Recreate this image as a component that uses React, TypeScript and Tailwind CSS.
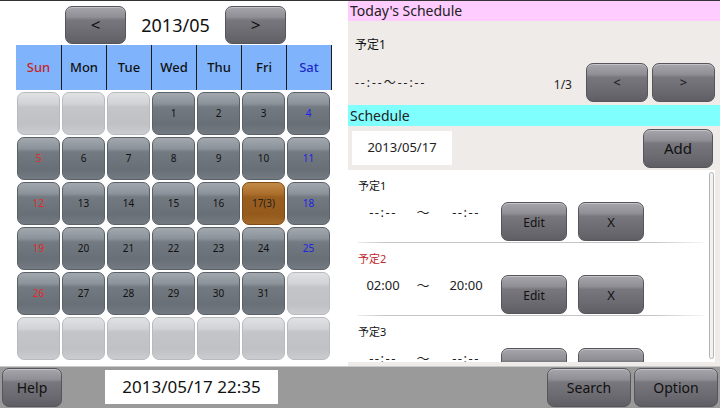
import React from "react";

const gloss =
  "flex items-center justify-center rounded-[7px] border border-[#56555b] bg-[linear-gradient(180deg,#a6a5ab_0%,#908f95_28%,#78777d_36%,#69686e_78%,#5f5e64_100%)] text-[#111] shadow-[inset_0_1px_0_rgba(255,255,255,0.35)]";

const cellDark =
  "flex items-center justify-center rounded-[7px] border border-[#5a6168] bg-[linear-gradient(180deg,#a2a8ae_0%,#8b9299_26%,#737a81_34%,#686f76_76%,#737a81_100%)] text-[10px]";
const cellLight =
  "rounded-[7px] border border-[#b9babd] bg-[linear-gradient(180deg,#e0e1e3_0%,#d2d3d6_26%,#c4c5c8_34%,#c0c1c4_76%,#cbcccf_100%)]";
const cellOrange =
  "flex items-center justify-center rounded-[7px] border border-[#7d4a16] bg-[linear-gradient(180deg,#c38a47_0%,#ac702e_26%,#9a5e1f_34%,#945a1c_76%,#a46a2a_100%)] text-[10px] text-[#222]";

type Cell = { n?: string; sel?: boolean };

const rows: Cell[][] = [
  [{}, {}, {}, { n: "1" }, { n: "2" }, { n: "3" }, { n: "4" }],
  [{ n: "5" }, { n: "6" }, { n: "7" }, { n: "8" }, { n: "9" }, { n: "10" }, { n: "11" }],
  [{ n: "12" }, { n: "13" }, { n: "14" }, { n: "15" }, { n: "16" }, { n: "17(3)", sel: true }, { n: "18" }],
  [{ n: "19" }, { n: "20" }, { n: "21" }, { n: "22" }, { n: "23" }, { n: "24" }, { n: "25" }],
  [{ n: "26" }, { n: "27" }, { n: "28" }, { n: "29" }, { n: "30" }, { n: "31" }, {}],
  [{}, {}, {}, {}, {}, {}, {}],
];

const days = ["Sun", "Mon", "Tue", "Wed", "Thu", "Fri", "Sat"];

function ScheduleItem({
  label,
  red,
  from,
  to,
}: {
  label: string;
  red?: boolean;
  from: string;
  to: string;
}) {
  const dash = (s: string) => (s.startsWith("-") ? " tracking-[1.5px]" : "");
  return (
    <div>
      <div className="h-[72px]">
        <div
          className={
            "flex h-[32px] items-center pl-[10px] text-[11px] " +
            (red ? "text-[#c0262c]" : "text-[#111]")
          }
        >
          {label}
        </div>
        <div className="flex h-[40px] items-start">
          <span className={"ml-[5px] w-[60px] text-center text-[13px] leading-[20px] text-[#222]" + dash(from)}>
            {from}
          </span>
          <span className="w-[20px] text-center text-[13px] leading-[20px] text-[#222]">〜</span>
          <span className={"w-[66px] text-center text-[13px] leading-[20px] text-[#222]" + dash(to)}>
            {to}
          </span>
          <div className={gloss + " ml-[2px] h-[39px] w-[66px] pt-[2px] text-[12px]"}>Edit</div>
          <div className={gloss + " ml-[11px] h-[39px] w-[66px] pt-[2px] text-[13px]"}>X</div>
        </div>
      </div>
      <div className="mx-[10px] h-px bg-[linear-gradient(90deg,rgba(190,190,190,0.3),#c4c4c4_8%,#c4c4c4_85%,rgba(220,220,220,0.2))]" />
    </div>
  );
}

export default function App() {
  return (
    <div className="flex h-[408px] w-[720px] flex-col overflow-hidden border-t border-[#333] bg-white font-['Noto_Sans','Noto_Sans_CJK_JP',sans-serif] text-[#111]">
      <div className="flex h-[365px]">
        {/* Left: calendar */}
        <div className="w-[348px] bg-white">
          <div className="flex h-[44px] pl-[65px] pt-[5px]">
            <div className={gloss + " h-[38px] w-[61px] text-[17px]"}>&lt;</div>
            <div className="flex h-[38px] w-[99px] items-center justify-center text-[18px]">
              2013/05
            </div>
            <div className={gloss + " h-[38px] w-[61px] text-[17px]"}>&gt;</div>
          </div>
          <div className="ml-[16px] grid h-[45px] w-[316px] grid-cols-[46px_45px_45px_45px_45px_45px_45px] bg-[#7fb4fd]">
            {days.map((d, i) => (
              <div
                key={d}
                className={
                  "flex items-center justify-center border-r border-[#1a1a1a] text-[13px] font-medium " +
                  (i === 0 ? "text-[#c4262a]" : i === 6 ? "text-[#1f2bc4]" : "text-[#111]")
                }
              >
                {d}
              </div>
            ))}
          </div>
          <div className="ml-[17px] mt-[2px] grid grid-cols-[repeat(7,43px)] grid-rows-[repeat(6,43px)] gap-[2px]">
            {rows.flatMap((r, ri) =>
              r.map((c, ci) => {
                if (!c.n) return <div key={ri + "-" + ci} className={cellLight} />;
                if (c.sel)
                  return (
                    <div key={ri + "-" + ci} className={cellOrange}>
                      {c.n}
                    </div>
                  );
                const color =
                  ci === 0 ? "text-[#e02a2a]" : ci === 6 ? "text-[#1c22e6]" : "text-[#111]";
                return (
                  <div key={ri + "-" + ci} className={cellDark + " " + color}>
                    {c.n}
                  </div>
                );
              })
            )}
          </div>
        </div>

        {/* Right: schedules */}
        <div className="w-[372px] bg-[#eeebe9]">
          <div className="h-[20px] bg-[#ffccff] pl-[2px] text-[14px] leading-[20px] text-[#222]">
            Today's Schedule
          </div>
          <div className="flex h-[84px] flex-col">
            <div className="flex h-[42px] items-center pl-[7px] pt-[6px] text-[12px]">予定1</div>
            <div className="flex h-[39px] items-center pr-[5px]">
              <div className="flex-1 pl-[7px] text-[12px] tracking-[2px] text-[#222]">--:--〜--:--</div>
              <div className="mt-[4px] text-[12px] text-[#222]">1/3</div>
              <div className={gloss + " ml-[14px] h-[39px] w-[62px] text-[13px]"}>&lt;</div>
              <div className={gloss + " ml-[4px] h-[39px] w-[63px] text-[13px]"}>&gt;</div>
            </div>
          </div>
          <div className="h-[21px] bg-[#80ffff] pl-[2px] text-[14px] leading-[21px] text-[#222]">
            Schedule
          </div>
          <div className="flex h-[44px] items-center justify-between pl-[4px] pr-[7px]">
            <div className="flex h-[34px] w-[100px] items-center justify-center bg-white text-[13px] text-[#222]">
              2013/05/17
            </div>
            <div className={gloss + " h-[39px] w-[70px] text-[15px]"}>Add</div>
          </div>
          <div className="relative h-[192px] w-[367px] overflow-hidden bg-white">
            <ScheduleItem label="予定1" from="--:--" to="--:--" />
            <ScheduleItem label="予定2" red from="02:00" to="20:00" />
            <ScheduleItem label="予定3" from="--:--" to="--:--" />
            <div className="absolute bottom-[3px] right-[1px] top-[2px] w-[5px] rounded-full border border-[#b3b3b3] bg-[#f2f2f2]" />
          </div>
        </div>
      </div>

      {/* Bottom bar */}
      <div className="flex h-[42px] items-start overflow-hidden border-t border-[#c9c9c9] bg-[#9a9a9a] pt-[1px]">
        <div className={gloss + " ml-[2px] h-[39px] w-[60px] text-[14px]"}>Help</div>
        <div className="ml-[43px] mt-[2px] flex h-[34px] w-[173px] items-center justify-center bg-white text-[17px] text-[#111]">
          2013/05/17 22:35
        </div>
        <div className="flex-1" />
        <div className={gloss + " h-[39px] w-[84px] text-[14px]"}>Search</div>
        <div className={gloss + " ml-[3px] mr-[2px] h-[39px] w-[84px] text-[14px]"}>Option</div>
      </div>
    </div>
  );
}
